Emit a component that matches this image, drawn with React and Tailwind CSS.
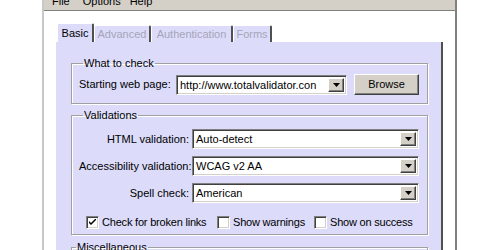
import React from 'react';

const sunken =
  'border border-t-[#808080] border-l-[#808080] border-b-white border-r-white shadow-[inset_1px_1px_0_#404040,inset_-1px_-1px_0_#d4d0c8]';
const raised =
  'border border-t-white border-l-white border-b-[#404040] border-r-[#404040] shadow-[inset_-1px_-1px_0_#808080]';

const Arrow = () => (
  <div className={`w-[16px] h-full bg-[#d4d0c8] flex items-center justify-center ${raised}`}>
    <svg width="7" height="4" viewBox="0 0 7 4">
      <path d="M0 0h7L3.5 4z" fill="#000" />
    </svg>
  </div>
);

const Combo = ({ value, className = '' }) => (
  <div className={`flex h-[20px] bg-white p-[2px] ${sunken} ${className}`}>
    <div className="flex-1 pl-[1px] leading-[14px] whitespace-nowrap overflow-hidden">{value}</div>
    <Arrow />
  </div>
);

const Check = ({ checked, label, className = '' }) => (
  <label className={`flex items-center gap-[3px] whitespace-nowrap ${className}`}>
    <span className={`w-[13px] h-[13px] shrink-0 bg-white flex items-center justify-center ${sunken}`}>
      {checked && (
        <svg width="7" height="7" viewBox="0 0 7 7">
          <path d="M0 2l2 2 5-5v2L2 6 0 4z" fill="#000" />
        </svg>
      )}
    </span>
    <span className="tracking-[-0.2px]">{label}</span>
  </label>
);

const Group = ({ title, className = '', children }) => (
  <fieldset
    className={`border border-[#a0a0a0] shadow-[1px_1px_0_#fff,inset_1px_1px_0_#fff] ${className}`}
  >
    <legend className="ml-[4px] px-[1px] leading-[13px]">{title}</legend>
    {children}
  </fieldset>
);

const tabs = [
  { name: 'Basic', w: 'w-[37px]', active: true },
  { name: 'Advanced', w: 'w-[57px]' },
  { name: 'Authentication', w: 'w-[82px]' },
  { name: 'Forms', w: 'w-[39px]' },
];

export default function App() {
  return (
    <div
      className="w-[500px] h-[250px] bg-white flex overflow-hidden text-[11px] text-black"
      style={{ fontFamily: '"Liberation Sans", Arial, sans-serif' }}
    >
      <div className="w-[42px] shrink-0" />
      <div className="w-[415px] h-[250px] shrink-0 flex flex-col overflow-hidden border-l-2 border-l-[#c8c8c8] border-r-2 border-r-[#808080]">
        <div className="h-[11px] shrink-0 bg-[#d4d0c8] border-b border-[#808080] overflow-hidden">
          <div className="flex mt-[-5px] leading-[13px] pl-[8px]">
            <span className="mr-[13px]">File</span>
            <span className="mr-[9px]">Options</span>
            <span>Help</span>
          </div>
        </div>
        <div className="flex-1 min-h-0 pl-[12px] pt-[12px]">
          <div className="flex items-end h-[19px] pl-[1px]">
            {tabs.map((t) => (
              <div
                key={t.name}
                className={`${t.w} ${t.active ? 'h-[19px] text-black' : 'h-[17px] text-[#a4a4b8]'} bg-[#dcdcfa] border-t border-l border-t-white border-l-white border-r-2 border-r-[#505050] rounded-t-[2px] flex items-center justify-center leading-[13px]`}
              >
                {t.name}
              </div>
            ))}
          </div>
          <div className="w-[387px] h-[300px] bg-[#dcdcfa] border-r-2 border-r-[#505050] pl-[15px] pt-[15px]">
            <Group title="What to check" className="w-[357px] px-[7px] pt-[4px] pb-[8px]">
              <div className="flex items-center">
                <span className="w-[97px]">Starting web page:</span>
                <Combo value="http://www.totalvalidator.con" className="w-[171px]" />
                <button
                  className={`ml-[7px] w-[65px] h-[21px] bg-[#d4d0c8] ${raised}`}
                >
                  Browse
                </button>
              </div>
            </Group>
            <Group title="Validations" className="w-[357px] mt-[5px] px-[7px] pt-[7px] pb-[5px]">
              <div className="grid grid-cols-[110px_227px] gap-x-[3px] gap-y-[7px] items-center">
                <span className="text-right">HTML validation:</span>
                <Combo value="Auto-detect" />
                <span className="text-right whitespace-nowrap">Accessibility validation:</span>
                <Combo value="WCAG v2 AA" />
                <span className="text-right">Spell check:</span>
                <Combo value="American" />
              </div>
              <div className="flex items-center mt-[12px] pl-[7px] h-[14px]">
                <Check checked label="Check for broken links" className="w-[131px]" />
                <Check label="Show warnings" className="w-[97px]" />
                <Check label="Show on success" />
              </div>
            </Group>
            <Group title="Miscellaneous" className="w-[357px] mt-[6px] h-[40px]" />
          </div>
        </div>
      </div>
    </div>
  );
}
